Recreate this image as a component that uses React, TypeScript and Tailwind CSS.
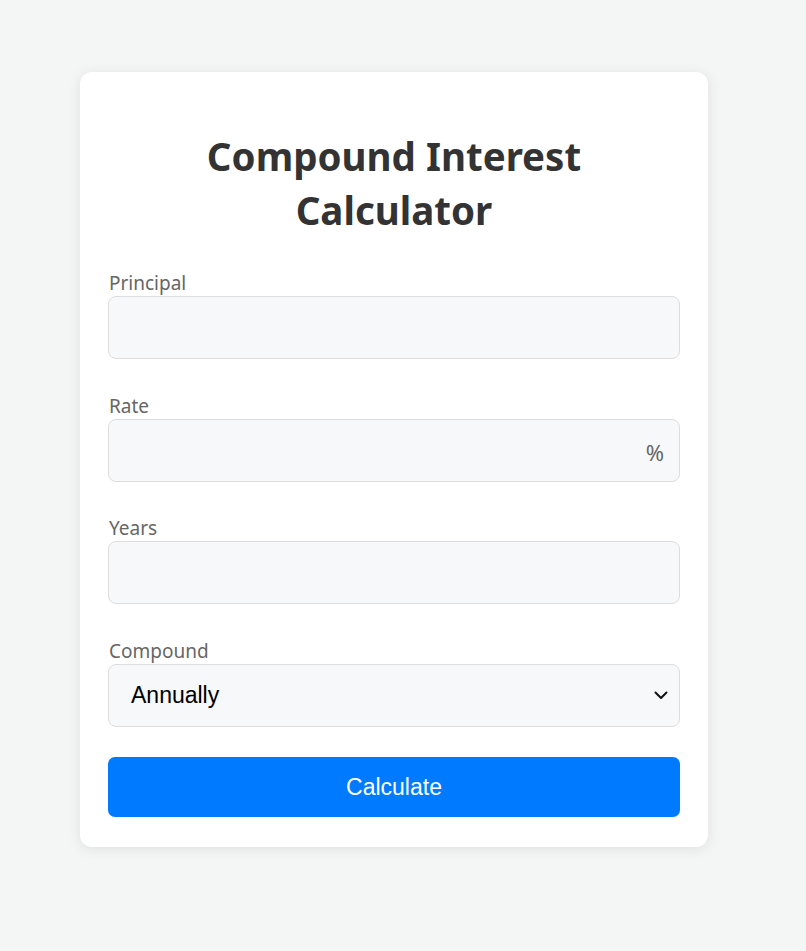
import React from "react";

function Field({ label, children }: { label: string; children: React.ReactNode }) {
  return (
    <div className="flex flex-col">
      <label className="text-[19px] leading-[26px] text-[#666666] pl-px">{label}</label>
      {children}
    </div>
  );
}

export default function App() {
  return (
    <div className="min-h-[951px] w-full bg-[#f4f5f5] pt-[72px]" style={{ fontFamily: '"Noto Sans", "Open Sans", sans-serif' }}>
      <div className="ml-[80px] w-[628px] rounded-[12px] bg-white px-[28px] pt-[57px] pb-[30px] shadow-[0_2px_14px_rgba(0,0,0,0.09)]">
        <h1 className="text-center text-[38.5px] font-bold leading-[54px] text-[#333333]">
          Compound Interest
          <br />
          Calculator
        </h1>
        <div className="mt-[33px] flex flex-col gap-[33.67px]">
          <Field label="Principal">
            <div className="h-[63px] rounded-[8px] border border-[#dddddd] bg-[#f7f8fa]" />
          </Field>
          <Field label="Rate">
            <div className="flex h-[63px] items-center justify-end rounded-[8px] border border-[#dddddd] bg-[#f7f8fa] pr-[15px]">
              <span className="text-[22px] leading-none text-[#666666] pt-[3px]">%</span>
            </div>
          </Field>
          <Field label="Years">
            <div className="h-[63px] rounded-[8px] border border-[#dddddd] bg-[#f7f8fa]" />
          </Field>
          <Field label="Compound">
            <div className="flex h-[63px] items-center justify-between rounded-[8px] border border-[#dddddd] bg-[#f7f8fa] pl-[22px] pr-[10px]">
              <span className="text-[23px] text-black" style={{ fontFamily: '"Liberation Sans", Arial, sans-serif' }}>Annually</span>
              <svg width="16" height="16" viewBox="0 0 16 16" fill="none">
                <path d="M2.5 5.5 L8 11 L13.5 5.5" stroke="#111" strokeWidth="2" strokeLinecap="round" strokeLinejoin="round" />
              </svg>
            </div>
          </Field>
        </div>
        <button className="mt-[30px] flex h-[60px] w-full items-center justify-center rounded-[7px] bg-[#007bff] text-[23px] text-white" style={{ fontFamily: '"Liberation Sans", Arial, sans-serif' }}>
          Calculate
        </button>
      </div>
    </div>
  );
}
